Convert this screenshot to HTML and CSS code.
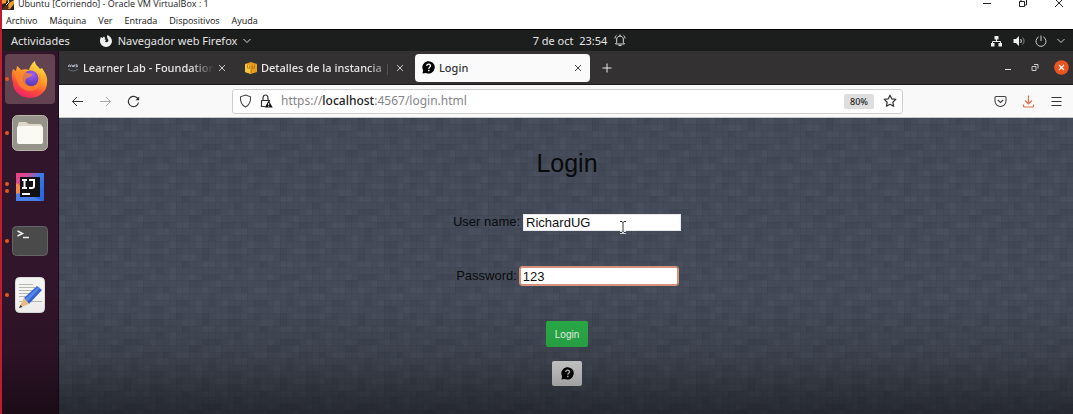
FILE: index.html
```html
<!DOCTYPE html>
<html lang="es">
<head>
<meta charset="utf-8">
<title>Ubuntu [Corriendo] - Oracle VM VirtualBox : 1</title>
<link rel="stylesheet" href="styles.css">
</head>
<body>
<div class="vm">
  <header class="vm-title">
    <svg class="vm-logo" width="12" height="12" viewBox="0 0 12 12"><path d="M0 0h12v12H0z" fill="#2b2020"/><path d="M0 0h5l-1 5-4 1zM7 5l5-3v4L8 11H5z" fill="#f09a2c"/><path d="M5 0l2 4-3 3" fill="none" stroke="#fff"/><path d="M0 11l4-4 3 2-2 3H0z" fill="#51342b"/></svg>
    <span class="vm-name">Ubuntu [Corriendo] - Oracle VM VirtualBox : 1</span>
    <div class="vm-controls">
      <button aria-label="Minimizar"><svg width="10" height="14" viewBox="0 0 10 14"><path d="M1 6.500h8" stroke="#222"/></svg></button>
      <button aria-label="Restaurar"><svg width="10" height="14" viewBox="0 0 10 14"><path d="M1.500 4.500h5v5h-5zM3 4V2.500h5.500V8H7" fill="none" stroke="#222"/></svg></button>
      <button aria-label="Cerrar"><svg width="10" height="14" viewBox="0 0 10 14"><path d="M1 2l8 8M9 2l-8 8" stroke="#222"/></svg></button>
    </div>
  </header>
  <nav class="vm-menu">
    <a href="#">Archivo</a><a href="#">Máquina</a><a href="#">Ver</a><a href="#">Entrada</a><a href="#">Dispositivos</a><a href="#">Ayuda</a>
  </nav>
  <div class="topbar">
    <div class="topbar-left">
      <button class="activities">Actividades</button>
      <button class="app-menu">
        <svg width="12" height="12" viewBox="0 0 12 12"><path d="M1 2l1.300 1L4 1.600 5.200 3 4.500 4.600l1.800.2L5 6.500c1 1.500 3.500.8 3.400-1.200C8.300 3.800 6.500 3.500 7.300 0 10 .8 12 3.500 12 6.200A6 5.800 0 0 1 0 6.200C0 4.500.3 3 1 2z" fill="#f2f2f2"/></svg>
        <span>Navegador web Firefox</span>
        <svg width="8" height="6" viewBox="0 0 8 6"><path d="M.5 1L4 4.500 7.500 1" fill="none" stroke="#ddd"/></svg>
      </button>
    </div>
    <div class="clock"><span>7 de oct&nbsp; 23:54</span>
      <svg width="12" height="13" viewBox="0 0 12 13"><path d="M1.500 10h9L9.300 8.300V5C9.300 1.200 2.700 1.200 2.700 5v3.300zM4.500 11.500h3M6 .5V2M1 4.500C1 3 1.500 2 2.500 1.300M11 4.500c0-1.500-.5-2.500-1.500-3.200" fill="none" stroke="#ddd"/></svg>
    </div>
    <div class="tray">
      <svg width="13" height="12" viewBox="0 0 13 12"><path d="M4.500 1h4v3.500h-4zM1 8h3.500v3.500H1zM8.500 8H12v3.500H8.500z" fill="#eee"/><path d="M6.500 4v2.500M2.500 8.500v-2h8v2" fill="none" stroke="#eee"/></svg>
      <svg width="12" height="12" viewBox="0 0 12 12"><path d="M.5 4h2.500l3-3v10L3 8H.5z" fill="#eee"/><path d="M7.500 4c1 1 1 3 0 4" fill="none" stroke="#eee"/><path d="M9.500 2.500c2 2 2 5 0 7" fill="none" stroke="#888"/></svg>
      <svg width="12" height="12" viewBox="0 0 12 12"><path d="M3.700 1.900a5 5 0 1 0 4.600 0M6 .5v5.500" fill="none" stroke="#ccc"/></svg>
      <svg width="8" height="6" viewBox="0 0 8 6"><path d="M.5 1L4 4.500 7.500 1" fill="none" stroke="#ccc"/></svg>
    </div>
  </div>
  <div class="desktop">
    <aside class="dock">
      <button class="dock-item active" aria-label="Firefox"><i class="dot"></i>
        <svg width="38" height="38" viewBox="0 0 38 38">
          <defs>
            <linearGradient id="fx" x1=".75" y1=".05" x2=".3" y2="1"><stop offset="0" stop-color="#ffe14a"/><stop offset=".4" stop-color="#ff9a24"/><stop offset=".7" stop-color="#ff4a3c"/><stop offset="1" stop-color="#e8206c"/></linearGradient>
            <radialGradient id="gl" cx=".6" cy=".25" r=".8"><stop offset="0" stop-color="#a35cf5"/><stop offset="1" stop-color="#4a35b0"/></radialGradient>
          </defs>
          <path d="M2 9l3 2 1-5c2 1 3 3 4 4 3-1 6-1 8 0 1-4 4-8 6-9 0 4 3 5 5 8l2-1c4 6 6 10 5 15a17 15 0 0 1-34 0C1 18 0 14 2 9z" fill="url(#fx)"/>
          <circle cx="19.500" cy="18.500" r="8" fill="url(#gl)"/>
          <path d="M4 12c5-2 9-2 12 1l5 1c0 3-3 3-6 5-2 3 1 7 5 7 7 0 10-6 7-13 5 5 4 16-6 18-10 1-17-8-17-19z" fill="#ff8a2a" opacity=".75"/>
        </svg>
      </button>
      <button class="dock-item" aria-label="Archivos"><i class="dot"></i>
        <svg width="36" height="36" viewBox="0 0 36 36"><rect x=".5" y=".5" width="35" height="35" rx="5" fill="#96938a" stroke="#b9b6ab"/><path d="M7 7h7l3 2h11a2 2 0 0 1 2 2v16a2 2 0 0 1-2 2H8a2 2 0 0 1-2-2V9z" fill="#dcd8ca"/><rect x="5" y="11" width="26" height="18" rx="2" fill="#fbf9f4"/></svg>
      </button>
      <button class="dock-item" aria-label="IntelliJ IDEA"><i class="dot double"></i>
        <svg width="28" height="28" viewBox="0 0 28 28"><defs><linearGradient id="ij" x1="0" y1="0" x2="1" y2=".7"><stop offset="0" stop-color="#f2407e"/><stop offset=".35" stop-color="#c8509c"/><stop offset=".6" stop-color="#3e7bea"/><stop offset="1" stop-color="#2868e0"/></linearGradient></defs><path d="M0 0h28v28H0z" fill="url(#ij)"/><path d="M0 10l7 4v14H0z" fill="#ef8a4c"/><path d="M0 21l8-2 18 9H0z" fill="#4b7fe8"/><path d="M4 4h20v20H4z" fill="#111"/><path d="M6 7h5M8.500 7v8M6 15h5M13 7h5v6q0 2-2 2h-3M6 21h8" fill="none" stroke="#fff" stroke-width="2"/></svg>
      </button>
      <button class="dock-item" aria-label="Terminal"><i class="dot"></i>
        <svg width="36" height="30" viewBox="0 0 36 30"><rect x=".5" y=".5" width="35" height="29" rx="4" fill="#4a4a4a" stroke="#676467"/><path d="M5.500 5l5 2.500-5 2.500M11 11.500h6" fill="none" stroke="#eee" stroke-width="1.500"/></svg>
      </button>
      <button class="dock-item" aria-label="Editor de textos"><i class="dot"></i>
        <svg width="30" height="36" viewBox="0 0 30 36"><rect x=".5" y=".5" width="29" height="35" rx="4" fill="#f4f4f2" stroke="#ddd"/><path d="M4 7.500h14M4 10.500h16M4 13.500h14M4 16.500h12M4 19.500h10M4 24.500h23" stroke="#b8b8b0"/><path d="M9 21L22 9l5 4-13 14z" fill="#3463cf"/><path d="M10 22L23 10l2 1-13 14z" fill="#5688ea"/><path d="M9 21l5 6-10 4z" fill="#f1bd80"/><path d="M5.500 28l2 2L4 31z" fill="#333"/></svg>
      </button>
    </aside>
    <section class="browser">
      <div class="tabs">
        <div class="tab"><svg width="12" height="12" viewBox="0 0 12 12"><path d="M1.500 5V3.500Q2.500 2 3.500 3.500V5M1.500 4h2M4.500 2.500l1 2.500.7-2 .6 2 1-2.500M10.500 3q-2-1-2 0t2 1-2 1" fill="none" stroke="#b9c4d4" stroke-width=".8"/><path d="M1 7q5 4 10 0" fill="none" stroke="#64707f"/></svg><span class="tab-title fade">Learner Lab - Foundation</span><button class="close" aria-label="Cerrar pestaña"><svg width="8" height="8" viewBox="0 0 8 8"><path d="M1 1l6 6M7 1L1 7" stroke="#ccc"/></svg></button></div>
        <div class="tab"><svg width="12" height="12" viewBox="0 0 12 12"><path d="M0 2l6-2 6 2v8l-6 2-6-2z" fill="#e69c1c"/><path d="M0 2l6 1.500V12l-6-2z" fill="#f9c440"/><path d="M6 3.500V12M2.500 3v3l2 .5v-3M9.500 3v3l-2 .5v-3" fill="none" stroke="#a86a10" stroke-width=".7"/></svg><span class="tab-title fade">Detalles de la instancia | E</span><button class="close" aria-label="Cerrar pestaña"><svg width="8" height="8" viewBox="0 0 8 8"><path d="M1 1l6 6M7 1L1 7" stroke="#ccc"/></svg></button></div>
        <div class="tab current"><svg width="13" height="13" viewBox="0 0 13 13"><path d="M.5 12.500l.6-3.200A6.200 6.200 0 1 1 4 12z" fill="#000"/><path d="M4.700 4.800C5 2.400 8.800 2.800 8.500 5c-.2 1.300-1.700 1.300-1.700 2.700M6.800 8.800v1.400" fill="none" stroke="#fff" stroke-width="1.400"/></svg><span class="tab-title">Login</span><button class="close" aria-label="Cerrar pestaña"><svg width="8" height="8" viewBox="0 0 8 8"><path d="M1 1l6 6M7 1L1 7" stroke="#444"/></svg></button></div>
        <button class="new-tab" aria-label="Nueva pestaña"><svg width="10" height="10" viewBox="0 0 10 10"><path d="M5 .5v9M.5 5h9" stroke="#eee"/></svg></button>
        <div class="win-controls">
          <button aria-label="Minimizar"><svg width="15" height="15" viewBox="0 0 15 15"><path d="M5 9.500h6" stroke="#ddd"/></svg></button>
          <button aria-label="Restaurar"><svg width="15" height="15" viewBox="0 0 15 15"><path d="M5 6.500h4v4H5zM7 4.500h4v4" fill="none" stroke="#ccc"/></svg></button>
          <button aria-label="Cerrar"><svg width="15" height="15" viewBox="0 0 15 15"><circle cx="7.500" cy="7.500" r="7.300" fill="#e95420"/><path d="M5 5l5 5M10 5l-5 5" stroke="#fff" stroke-width="1.200"/></svg></button>
        </div>
      </div>
      <div class="toolbar">
        <div class="nav-buttons">
          <button aria-label="Atrás"><svg width="13" height="13" viewBox="0 0 13 13"><path d="M12 6.500H1.500M6 2L1.500 6.500 6 11" fill="none" stroke="#333"/></svg></button>
          <button aria-label="Adelante"><svg width="13" height="13" viewBox="0 0 13 13"><path d="M1 6.500h10.500M7 2l4.500 4.500L7 11" fill="none" stroke="#aaa"/></svg></button>
          <button aria-label="Recargar"><svg width="13" height="13" viewBox="0 0 13 13"><path d="M11.500 7.500A5.100 5.100 0 1 1 10 2.800l1.500 1.400" fill="none" stroke="#333" stroke-width="1.200"/><path d="M12.200 1.500v3.700H8.500z" fill="#333"/></svg></button>
        </div>
        <div class="urlbar">
          <svg width="13" height="14" viewBox="0 0 13 14"><path d="M6.500 1l5 1.800C12 8 10 11.300 6.500 13 3 11.300 1 8 1.500 2.800z" fill="none" stroke="#444" stroke-width="1.100"/></svg>
          <svg class="lock" width="13" height="14" viewBox="0 0 13 14"><path d="M5 12.500H1.500v-6h8v1M3 6.500V4c0-4 5-4 5 0v2.500" fill="none" stroke="#333" stroke-width="1.200"/><path d="M8.700 6.500l4 7H4.700z" fill="#111"/><path d="M8.700 9v2M8.700 11.700v1" stroke="#fff"/></svg>
          <div class="url">https://<b>localhost</b>:4567/login.html</div>
          <button class="zoom">80%</button>
          <button aria-label="Marcador"><svg width="14" height="14" viewBox="0 0 14 14"><path d="M7 1.200l1.800 3.700 4 .5-3 2.800.8 4.100L7 10.300l-3.600 2 .8-4.100-3-2.800 4-.5z" fill="none" stroke="#333" stroke-width="1.200" stroke-linejoin="round"/></svg></button>
        </div>
        <div class="tools">
          <button aria-label="Pocket"><svg width="13" height="13" viewBox="0 0 13 13"><path d="M2 1.500h9q1 0 1 1V6A5.500 5.500 0 0 1 1 6V2.500q0-1 1-1z" fill="none" stroke="#444" stroke-width="1.100"/><path d="M3.800 5l2.700 2.500L9.200 5" fill="none" stroke="#444" stroke-width="1.200"/></svg></button>
          <button aria-label="Descargas"><svg width="13" height="13" viewBox="0 0 13 13"><path d="M6.500.5v8M3 5.500L6.500 9 10 5.500M1.500 9.500v1.500q0 1 1 1h8q1 0 1-1V9.500" fill="none" stroke="#e0704c" stroke-width="1.200"/></svg></button>
          <button aria-label="Menú"><svg width="13" height="13" viewBox="0 0 13 13"><path d="M1.500 2.500h10M1.500 6.500h10M1.500 10.500h10" stroke="#333"/></svg></button>
        </div>
      </div>
      <main class="page">
        <svg class="texture" width="100%" height="100%" aria-hidden="true">
          <defs>
            <pattern id="grid" width="78" height="65" patternUnits="userSpaceOnUse">
              <path fill="#fff" fill-opacity=".025" d="M0 0h13v6H0zM26 0h6v6h-6zM45 6h14v7H45zM6 13h7v6H6zM65 13h13v6H65zM32 19h7v13h-7zM13 26h6v6h-6zM52 26h7v6h-7zM0 32h6v7H0zM39 39h13v6H39zM65 39h7v6h-7zM19 45h13v7H19zM6 52h7v6H6zM58 52h7v13h-7zM32 58h7v7h-7z"/>
              <path fill="#000" fill-opacity=".05" d="M13 6h13v7H13zM39 0h6v6h-6zM65 0h7v13h-7zM19 19h7v7h-7zM45 13h7v6h-7zM0 26h6v6H0zM65 26h13v6H65zM26 39h6v6h-6zM6 39h13v6H6zM52 32h13v7H52zM39 52h13v6H39zM72 45h6v13h-6zM13 58h13v7H13z"/>
            </pattern>
            <pattern id="lines" width="13" height="13" patternUnits="userSpaceOnUse"><path d="M0 .5h13M0 6.500h13M.5 0v13M6.500 0v13" stroke="#202833" stroke-opacity=".09"/></pattern>
          </defs>
          <rect width="100%" height="100%" fill="url(#grid)"/><rect width="100%" height="100%" fill="url(#lines)"/>
        </svg>
        <form class="login">
          <h1>Login</h1>
          <div class="field"><label for="user">User name:</label><input id="user" type="text" value="RichardUG"></div>
          <div class="field"><label for="pass">Password:</label><input id="pass" class="focused" type="text" value="123"></div>
          <button class="submit" type="button">Login</button>
          <button class="help" type="button" aria-label="Help"><svg width="13" height="13" viewBox="0 0 13 13"><path d="M.5 12.500l.6-3.200A6.200 6.200 0 1 1 4 12z" fill="#000"/><path d="M4.700 4.800C5 2.400 8.800 2.800 8.500 5c-.2 1.300-1.700 1.300-1.700 2.700M6.800 8.800v1.400" fill="none" stroke="#ddd" stroke-width="1.400"/></svg></button>
          <svg class="pointer" width="8" height="14" viewBox="0 0 8 14"><path d="M1 1.500h2l1 1 1-1h2M4 2v10M1 12.500h2l1-1 1 1h2" fill="none" stroke="#fff" stroke-width="2.500"/><path d="M1 1.500h2l1 1 1-1h2M4 2v10M1 12.500h2l1-1 1 1h2" fill="none" stroke="#333"/></svg>
        </form>
      </main>
    </section>
  </div>
  <div class="shade"></div>
</div>
</body>
</html>
```
FILE: styles.css
```css
* { box-sizing: border-box; }
body { margin: 0; background: #fff; font-family: "Noto Sans", "Open Sans", sans-serif; }
button { border: 0; padding: 0; margin: 0; background: none; color: inherit; font: inherit; display: flex; align-items: center; justify-content: center; }
svg { display: block; flex: none; }
.vm { position: relative; min-height: 100vh; display: flex; flex-direction: column; border-left: 2px solid #c01c30; overflow: hidden; }
.vm-title { height: 12px; display: flex; align-items: center; gap: 4px; padding-bottom: 4px; color: #222; font: 9px/12px "Open Sans", sans-serif; }
.vm-name { flex: 1; white-space: nowrap; }
.vm-controls { display: flex; gap: 26px; padding: 0 9px 0 0; }
.vm-menu { height: 17px; display: flex; align-items: center; gap: 12px; padding: 1px 0 0 4px; font: 9px/14px "Open Sans", sans-serif; }
.vm-menu a { color: #111; text-decoration: none; }
.topbar { height: 22px; display: grid; grid-template-columns: 1fr auto 1fr; align-items: center; background: #1c1d1d; border-top: 1px solid #000; color: #e4e4e4; font-size: 11px; line-height: 16px; }
.topbar-left { display: flex; gap: 30px; padding-left: 9px; }
.app-menu { gap: 6px; }
.clock { display: flex; align-items: center; gap: 7px; margin-left: 84px; }
.tray { display: flex; align-items: center; justify-content: flex-end; gap: 10px; padding-right: 8px; }
.desktop { flex: 1; display: flex; }
.dock { width: 57px; padding: 3px; background: #31152a; border-right: 1px solid #17101a; display: flex; flex-direction: column; gap: 4px; }
.dock-item { position: relative; height: 50px; border-radius: 4px; }
.dock-item.active { background: #644350; }
.dot { position: absolute; left: 0; top: 23px; width: 4px; height: 4px; border-radius: 50%; background: #e95420; }
.dot.double { top: 20px; box-shadow: 0 7px #e95420; }
.browser { flex: 1; min-width: 0; display: flex; flex-direction: column; }
.tabs { height: 34px; display: flex; align-items: center; background: #333132; color: #e8e8e8; border-bottom: 1px solid #1d1b1c; }
.tab { flex: 0 1 178px; min-width: 0; height: 28px; display: flex; align-items: center; gap: 4px; padding: 0 11px 0 8px; font-size: 11px; font-weight: 500; line-height: 16px; }
.tab.current { flex-basis: 175px; background: #fafafa; color: #333; border-radius: 4px; padding: 0 8px 0 7px; }
.tab-title { flex: 1; overflow: hidden; white-space: nowrap; }
.fade { mask-image: linear-gradient(90deg, #000 82%, transparent); }
.new-tab { width: 34px; height: 28px; }
.win-controls { margin-left: auto; display: flex; gap: 12px; padding-right: 4px; }
.toolbar { height: 33px; display: flex; align-items: center; background: #f9f9fa; border-bottom: 1px solid #c9c9c9; }
.nav-buttons { display: flex; gap: 15px; padding-left: 12px; width: 173px; }
.urlbar { flex: 1; height: 25px; display: flex; align-items: center; gap: 8px; padding: 0 5px 0 6px; background: #fff; border: 1px solid #cfcfd2; border-radius: 3px; }
.url { flex: 1; color: #85858a; font-size: 12px; line-height: 16px; white-space: nowrap; }
.url b { color: #222; font-weight: 500; }
.zoom { height: 15px; width: 30px; margin-right: 1px; border-radius: 2px; background: #dedede; color: #222; font-size: 9px; font-weight: 500; }
.tools { display: flex; gap: 15px; padding: 0 10px 0 91px; }
.page { position: relative; flex: 1; background: #454b58; font-family: "Liberation Sans", Arial, sans-serif; color: #080a0d; }
.texture { position: absolute; inset: 0; }
.login { position: relative; display: flex; flex-direction: column; align-items: center; width: 242px; max-width: 100%; margin: 0 auto; padding: 30px 0 28px 2px; }
.login h1 { margin: 0 0 35px; font-size: 25px; line-height: 30px; font-weight: 400; }
.field { display: flex; align-items: center; gap: 3px; height: 18px; margin-bottom: 36px; font-size: 13px; line-height: 16px; }
.field input { width: 158px; height: 17px; padding: 0 2px; border: 1px solid #e8e8ef; background: #fff; color: #111; font: inherit; }
.field .focused { height: 18px; border: 1px solid #d99078; border-radius: 2px; outline: 1px solid #d6947e; }
.submit { width: 42px; height: 26px; border-radius: 2px; background: #2bb04a; color: #f4fff5; font-size: 10px; margin-bottom: 14px; }
.help { width: 30px; height: 25px; border-radius: 2px; background: #e4e4e4; }
.pointer { position: absolute; left: 174px; top: 102px; }
.shade { position: absolute; left: -2px; right: 0; bottom: 0; height: 120px; background: linear-gradient(transparent, rgba(0, 0, 0, .12) 50%, rgba(0, 0, 0, .45)); pointer-events: none; }
```
